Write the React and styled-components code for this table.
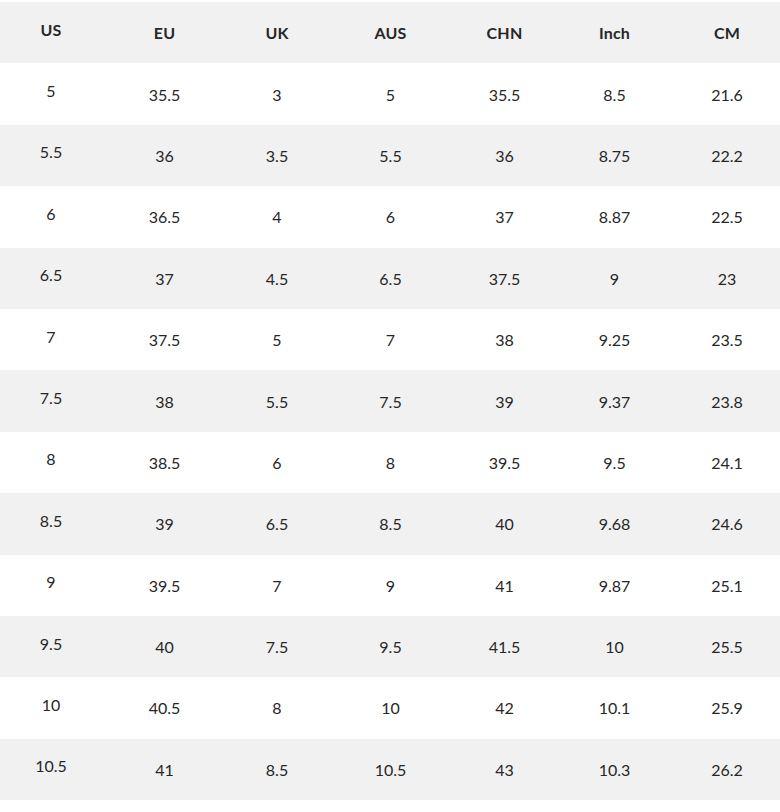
import React from "react";
import styled, { createGlobalStyle } from "styled-components";

const GlobalStyle = createGlobalStyle`
    html, body {
        margin: 0;
        padding: 0;
        background: #fff;
    }
    body {
        padding-top: 2px;
        font-family: Lato, "Open Sans", "Liberation Sans", sans-serif;
        color: #272727;
    }
`;

const Table = styled.div`
    width: 780px;
    display: flex;
    flex-direction: column;
`;

const Row = styled.div`
    display: grid;
    grid-template-columns: 102px 125px 100px 127px 101px 119px 106px;
    height: 61.4px;
    background: ${props => (props.shaded ? "#f1f1f1" : "#fff")};
`;

const Cell = styled.div`
    display: flex;
    align-items: center;
    justify-content: center;
    font-size: 16px;
    font-weight: ${props => (props.head ? 700 : 400)};
    letter-spacing: ${props => (props.head ? "0.2px" : "0")};
    padding-bottom: ${props => (props.first ? "7px" : "0")};
`;

const headers = ["US", "EU", "UK", "AUS", "CHN", "Inch", "CM"];

const sizes = [
    ["5", "35.5", "3", "5", "35.5", "8.5", "21.6"],
    ["5.5", "36", "3.5", "5.5", "36", "8.75", "22.2"],
    ["6", "36.5", "4", "6", "37", "8.87", "22.5"],
    ["6.5", "37", "4.5", "6.5", "37.5", "9", "23"],
    ["7", "37.5", "5", "7", "38", "9.25", "23.5"],
    ["7.5", "38", "5.5", "7.5", "39", "9.37", "23.8"],
    ["8", "38.5", "6", "8", "39.5", "9.5", "24.1"],
    ["8.5", "39", "6.5", "8.5", "40", "9.68", "24.6"],
    ["9", "39.5", "7", "9", "41", "9.87", "25.1"],
    ["9.5", "40", "7.5", "9.5", "41.5", "10", "25.5"],
    ["10", "40.5", "8", "10", "42", "10.1", "25.9"],
    ["10.5", "41", "8.5", "10.5", "43", "10.3", "26.2"],
];

const App = () => (
    <>
        <GlobalStyle />
        <Table>
            <Row shaded>
                {headers.map((h, i) => (
                    <Cell key={h} head first={i === 0}>
                        {h}
                    </Cell>
                ))}
            </Row>
            {sizes.map((row, r) => (
                <Row key={row[0]} shaded={r % 2 === 1}>
                    {row.map((v, i) => (
                        <Cell key={i} first={i === 0}>
                            {v}
                        </Cell>
                    ))}
                </Row>
            ))}
        </Table>
    </>
);

export default App;
